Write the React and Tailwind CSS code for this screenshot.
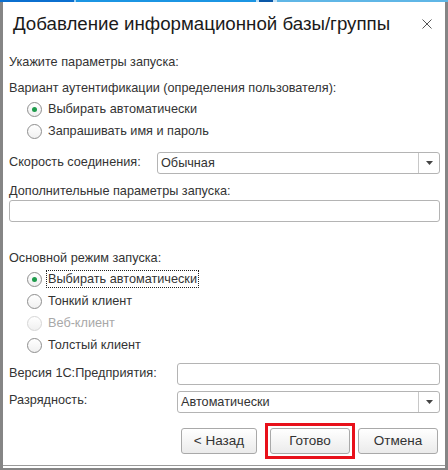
import React from 'react';

const font = { fontFamily: '"Liberation Sans", Arial, sans-serif' };

const Radio = ({ checked, disabled, focused, children }) => (
    <div className="flex items-center h-[22px] pl-[18px]">
        <span className={`w-[15px] h-[15px] rounded-full border flex items-center justify-center bg-gradient-to-b from-white to-[#f0f0f0] ${disabled ? 'border-[#d6d6d6]' : 'border-[#8e8e8e]'}`}>
            {checked && <span className="w-[5px] h-[5px] rounded-full bg-[#1e9b4c]" />}
        </span>
        <span className={`ml-[4px] px-[1px] leading-[16px] border ${focused ? 'border-dotted border-[#222]' : 'border-transparent'} ${disabled ? 'text-[#a8a8a8]' : 'text-[#333]'}`}>
            {children}
        </span>
    </div>
);

const Select = ({ value, className = '' }) => (
    <div className={`flex h-[22px] border border-[#b4b4b4] rounded-[3px] bg-white ${className}`}>
        <div className="flex-1 pl-[3px] leading-[20px] text-[#333]">{value}</div>
        <div className="w-[21px] border-l border-[#c8c8c8] flex items-center justify-center">
            <svg width="7" height="4" viewBox="0 0 7 4"><path d="M0 0h7L3.5 4z" fill="#444" /></svg>
        </div>
    </div>
);

const Input = ({ className = '' }) => (
    <div className={`h-[22px] border border-[#b4b4b4] rounded-[3px] bg-white ${className}`} />
);

const Button = ({ children, className = '' }) => (
    <button type="button" className={`h-[26px] border border-[#a9a9a9] rounded-[3px] bg-gradient-to-b from-white to-[#ebebeb] text-[13.5px] text-[#333] ${className}`}>
        {children}
    </button>
);

export default function App() {
    return (
        <div className="w-[448px] h-[470px] bg-white flex flex-col text-[12.7px] text-[#333] overflow-hidden" style={font}>
            {/* top strip of the desktop behind */}
            <div className="flex h-[2px] shrink-0">
                <div className="w-[74px] bg-[#0b6fcf]" />
                <div className="w-[2px] bg-[#9fd0f0]" />
                <div className="w-[180px] bg-[#1b95e3]" />
                <div className="w-[3px] bg-[#bfe0f5]" />
                <div className="w-[14px] bg-[#0a58a8]" />
                <div className="w-[4px] bg-[#c4e2f5]" />
                <div className="flex-1 bg-[#5fb6e6]" />
            </div>
            <div className="flex-1 flex flex-col border-l-[3px] border-r-[3px] border-b-[2px] border-[#858585]">
                <div className="h-[44px] flex items-center justify-between pl-[10px] pr-[13px] shrink-0">
                    <span className="text-[18.7px] text-[#1a1a1a] mt-[1px]">Добавление информационной базы/группы</span>
                    <svg width="10" height="10" viewBox="0 0 10 10"><path d="M0.5 0.5l9 9M9.5 0.5l-9 9" stroke="#555" strokeWidth="1" /></svg>
                </div>

                <div className="pl-[6px] pr-[5px] flex flex-col">
                    <div className="h-[18px] leading-[18px] mt-[7px]">Укажите параметры запуска:</div>
                    <div className="h-[18px] leading-[18px] mt-[8px]">Вариант аутентификации (определения пользователя):</div>
                    <div className="mt-[1px]">
                        <Radio checked>Выбирать автоматически</Radio>
                        <Radio>Запрашивать имя и пароль</Radio>
                    </div>
                    <div className="flex items-center mt-[10px]">
                        <span className="w-[148px]">Скорость соединения:</span>
                        <Select value="Обычная" className="flex-1" />
                    </div>
                    <div className="h-[18px] leading-[18px] mt-[8px]">Дополнительные параметры запуска:</div>
                    <Input />
                    <div className="h-[18px] leading-[18px] mt-[27px]">Основной режим запуска:</div>
                    <div className="mt-[1px]">
                        <Radio checked focused>Выбирать автоматически</Radio>
                        <Radio>Тонкий клиент</Radio>
                        <Radio disabled>Веб-клиент</Radio>
                        <Radio>Толстый клиент</Radio>
                    </div>
                    <div className="flex items-center mt-[7px]">
                        <span className="w-[168px]">Версия 1С:Предприятия:</span>
                        <Input className="flex-1" />
                    </div>
                    <div className="flex items-start mt-[6px]">
                        <span className="w-[168px] leading-[18px]">Разрядность:</span>
                        <Select value="Автоматически" className="flex-1" />
                    </div>
                    <div className="flex justify-end items-center mt-[10px] pr-[2px]">
                        <Button className="w-[76px]">&lt; Назад</Button>
                        <div className="ml-[8px] border-[3px] border-[#e8101a] p-[2px]">
                            <Button className="w-[80px] block">Готово</Button>
                        </div>
                        <Button className="w-[80px] ml-[3px]">Отмена</Button>
                    </div>
                </div>
                <div className="mt-auto h-[1px] bg-[#9a9a9a] mb-[2px]" />
            </div>
        </div>
    );
}
